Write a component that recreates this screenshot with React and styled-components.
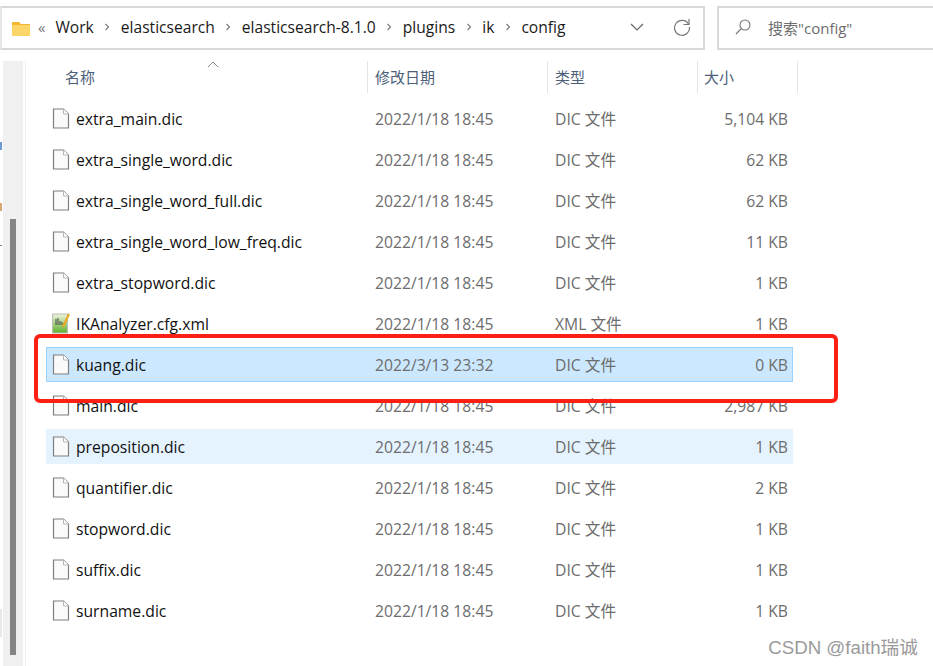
import React from "react";
import styled, { createGlobalStyle } from "styled-components";

const GlobalStyle = createGlobalStyle`
  html, body {
    margin: 0;
    padding: 0;
    background: #fff;
  }
  body {
    font-family: "Open Sans", "Noto Sans CJK SC", sans-serif;
    overflow: hidden;
  }
`;

const files = [
  { name: "extra_main.dic", date: "2022/1/18 18:45", type: "DIC 文件", size: "5,104 KB" },
  { name: "extra_single_word.dic", date: "2022/1/18 18:45", type: "DIC 文件", size: "62 KB" },
  { name: "extra_single_word_full.dic", date: "2022/1/18 18:45", type: "DIC 文件", size: "62 KB" },
  { name: "extra_single_word_low_freq.dic", date: "2022/1/18 18:45", type: "DIC 文件", size: "11 KB" },
  { name: "extra_stopword.dic", date: "2022/1/18 18:45", type: "DIC 文件", size: "1 KB" },
  { name: "IKAnalyzer.cfg.xml", date: "2022/1/18 18:45", type: "XML 文件", size: "1 KB", xml: true },
  { name: "kuang.dic", date: "2022/3/13 23:32", type: "DIC 文件", size: "0 KB", state: "selected" },
  { name: "main.dic", date: "2022/1/18 18:45", type: "DIC 文件", size: "2,987 KB" },
  { name: "preposition.dic", date: "2022/1/18 18:45", type: "DIC 文件", size: "1 KB", state: "hover" },
  { name: "quantifier.dic", date: "2022/1/18 18:45", type: "DIC 文件", size: "2 KB" },
  { name: "stopword.dic", date: "2022/1/18 18:45", type: "DIC 文件", size: "1 KB" },
  { name: "suffix.dic", date: "2022/1/18 18:45", type: "DIC 文件", size: "1 KB" },
  { name: "surname.dic", date: "2022/1/18 18:45", type: "DIC 文件", size: "1 KB" },
];

const crumbs = ["Work", "elasticsearch", "elasticsearch-8.1.0", "plugins", "ik", "config"];

const Page = styled.div`
  position: relative;
  width: 933px;
  height: 666px;
  overflow: hidden;
  background: #fff;
  padding-top: 6px;
  box-sizing: border-box;
`;

const TopBar = styled.div`
  display: flex;
  gap: 12px;
  height: 44px;
  margin-right: -40px;
`;

const AddressBar = styled.div`
  width: 705px;
  box-sizing: border-box;
  border: 2px solid #d9d9d9;
  border-left-color: #e6e6e6;
  display: flex;
  align-items: center;
  padding-left: 10px;
  padding-bottom: 2px;
  font-size: 15.6px;
  color: #1a1a1a;
`;

const Crumb = styled.span`
  line-height: 20px;
`;

const Sep = styled.svg`
  width: 6px;
  height: 8px;
  margin: 0 10.5px;
  flex: none;
`;

const Spacer = styled.div`
  flex: 1;
`;

const BackChevrons = styled.span`
  font-size: 15px;
  color: #777;
  margin: 0 10px 0 8px;
`;

const ToolIcon = styled.svg`
  flex: none;
  display: block;
  margin-right: ${(p) => p.$mr}px;
`;

const SearchBox = styled.div`
  flex: 1;
  box-sizing: border-box;
  border: 2px solid #d9d9d9;
  display: flex;
  align-items: center;
  padding-left: 16px;
  padding-bottom: 2px;
  gap: 17px;
  font-size: 15px;
  color: #6d6d6d;
`;

const Body = styled.div`
  display: flex;
  margin-top: 11px;
  height: 605px;
`;

const ScrollTrack = styled.div`
  width: 22px;
  margin-left: 3px;
  background: #f0f0f0;
  display: flex;
  flex-direction: column;
  padding-top: 158px;
  padding-bottom: 11px;
  box-sizing: border-box;
  align-items: center;
  border-right: 2px solid #fff;
  flex: none;
`;

const ScrollThumb = styled.div`
  width: 6px;
  flex: 1;
  background: #858585;
`;

const Divider = styled.div`
  width: 1px;
  background: #efefef;
  flex: none;
`;

const ListPane = styled.div`
  margin-left: 20px;
  flex: 1;
`;

const HeaderRow = styled.div`
  position: relative;
  display: grid;
  grid-template-columns: 322px 180px 150px 100px;
  height: 32px;
  font-size: 15px;
  color: #4c607a;
`;

const HeaderCell = styled.div`
  box-sizing: border-box;
  padding-left: ${(p) => p.$pad}px;
  line-height: 32px;
  border-right: 1px solid #e4e4e4;
`;

const SortArrow = styled.svg`
  position: absolute;
  left: 161px;
  top: 0;
`;

const Rows = styled.div`
  display: flex;
  flex-direction: column;
  gap: 6px;
  margin-top: 8px;
  width: 747px;
`;

const Row = styled.div`
  display: grid;
  grid-template-columns: 320px 180px 150px 1fr;
  align-items: center;
  height: 35px;
  box-sizing: border-box;
  border: 1px solid
    ${(p) => (p.$state === "selected" ? "#99d1ff" : p.$state === "hover" ? "#e5f3ff" : "transparent")};
  background: ${(p) => (p.$state === "selected" ? "#cce8ff" : p.$state === "hover" ? "#e5f3ff" : "transparent")};
  font-size: 15.7px;
`;

const NameCell = styled.div`
  display: flex;
  align-items: center;
  gap: 6px;
  padding-left: 5px;
  color: #111;
  line-height: 20px;
`;

const Cell = styled.div`
  color: #6d6d6d;
  padding-left: 8px;
  line-height: 20px;
`;

const SizeCell = styled.div`
  color: #6d6d6d;
  text-align: right;
  padding-right: 4px;
  line-height: 20px;
`;

const Highlight = styled.div`
  position: absolute;
  left: 34px;
  top: 334px;
  width: 804px;
  height: 69px;
  box-sizing: border-box;
  border: 4px solid #fb1f14;
  border-radius: 6px;
`;

const Watermark = styled.div`
  position: absolute;
  right: 15px;
  bottom: 7px;
  font-family: "Liberation Sans", "Noto Sans CJK SC", sans-serif;
  font-size: 18.7px;
  color: #9a9a9a;
`;

const EdgeMark = styled.div`
  position: absolute;
  left: 0;
  top: ${(p) => p.$top}px;
  width: ${(p) => p.$w}px;
  height: ${(p) => p.$h}px;
  background: ${(p) => p.$color};
`;

const FileIcon = () => (
  <svg width="18" height="21" viewBox="0 0 18 21" style={{ flex: "none" }}>
    <path d="M1.5 1h10l5 5v14h-15z" fill="#fafafa" stroke="#7f7f7f" strokeWidth="1.2" />
    <path d="M11.5 1v5h5" fill="#fff" stroke="#b5b5b5" strokeWidth="1" />
  </svg>
);

const XmlIcon = () => (
  <svg width="18" height="21" viewBox="0 0 18 21" style={{ flex: "none" }}>
    <defs>
      <linearGradient id="xmlGreen" x1="0" y1="0" x2="0" y2="1">
        <stop offset="0" stopColor="#eef3dc" />
        <stop offset="1" stopColor="#5cb02c" />
      </linearGradient>
    </defs>
    <rect x="0.5" y="1" width="15" height="19" fill="url(#xmlGreen)" stroke="#b8bcb4" />
    <path d="M4 6v6M6 5v7M8 8v4M10 9v3" stroke="#444" strokeWidth="1" />
    <path d="M17 1L11 14" stroke="#e9a825" strokeWidth="2.2" />
  </svg>
);

const Chevron = () => (
  <Sep viewBox="0 0 6 8">
    <path d="M1.5 1l3 3-3 3" fill="none" stroke="#777" strokeWidth="1.1" />
  </Sep>
);

export default function App() {
  return (
    <>
      <GlobalStyle />
      <Page>
        <TopBar>
          <AddressBar>
            <svg width="18" height="15" viewBox="0 0 18 15" style={{ flex: "none", marginTop: 2 }}>
              <path d="M0 1h7l2 2h9v3H0z" fill="#f2b632" />
              <path d="M0 4h18v11H0z" fill="#fbd567" />
            </svg>
            <BackChevrons>«</BackChevrons>
            {crumbs.map((c, i) => (
              <React.Fragment key={c}>
                {i > 0 && <Chevron />}
                <Crumb>{c}</Crumb>
              </React.Fragment>
            ))}
            <Spacer />
            <ToolIcon $mr={29} width="14" height="8" viewBox="0 0 14 8">
              <path d="M1 1l6 6 6-6" fill="none" stroke="#666" strokeWidth="1.2" />
            </ToolIcon>
            <ToolIcon $mr={12} width="18" height="18" viewBox="0 0 18 18">
              <path d="M15.5 6a7.5 7.5 0 1 0 1 3" fill="none" stroke="#777" strokeWidth="1.2" />
              <path d="M16 1v5.5h-5.5" fill="none" stroke="#777" strokeWidth="1.2" />
            </ToolIcon>
          </AddressBar>
          <SearchBox>
            <svg width="16" height="16" viewBox="0 0 16 16" style={{ flex: "none" }}>
              <circle cx="10" cy="6" r="5" fill="none" stroke="#777" strokeWidth="1.1" />
              <path d="M6.3 9.7L1 15" stroke="#777" strokeWidth="1.2" />
            </svg>
            <span>搜索"config"</span>
          </SearchBox>
        </TopBar>
        <Body>
          <ScrollTrack>
            <ScrollThumb />
          </ScrollTrack>
          <Divider />
          <ListPane>
            <HeaderRow>
              <HeaderCell $pad={19}>名称</HeaderCell>
              <HeaderCell $pad={7}>修改日期</HeaderCell>
              <HeaderCell $pad={7}>类型</HeaderCell>
              <HeaderCell $pad={6}>大小</HeaderCell>
              <SortArrow width="12" height="7" viewBox="0 0 12 7">
                <path d="M1 6l5-5 5 5" fill="none" stroke="#888" strokeWidth="1" />
              </SortArrow>
            </HeaderRow>
            <Rows>
              {files.map((f) => (
                <Row key={f.name} $state={f.state}>
                  <NameCell>
                    {f.xml ? <XmlIcon /> : <FileIcon />}
                    <span>{f.name}</span>
                  </NameCell>
                  <Cell>{f.date}</Cell>
                  <Cell>{f.type}</Cell>
                  <SizeCell>{f.size}</SizeCell>
                </Row>
              ))}
            </Rows>
          </ListPane>
        </Body>
        <EdgeMark $top={142} $w={2} $h={8} $color="#6f9bd2" />
        <EdgeMark $top={203} $w={2} $h={8} $color="#d6a875" />
        <EdgeMark $top={245} $w={2} $h={1} $color="#777" />
        <EdgeMark $top={609} $w={2} $h={28} $color="#e8e8e8" />
        <Highlight />
        <Watermark>CSDN @faith瑞诚</Watermark>
      </Page>
    </>
  );
}
